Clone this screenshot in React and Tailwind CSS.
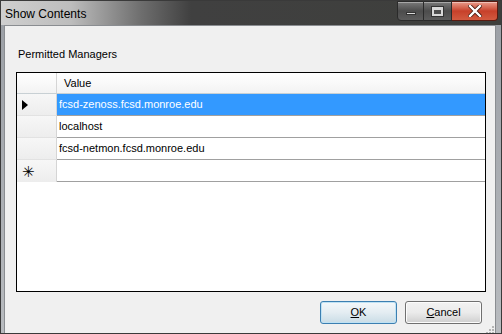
import React from 'react'

const rows = [
  { value: 'fcsd-zenoss.fcsd.monroe.edu', selected: true },
  { value: 'localhost' },
  { value: 'fcsd-netmon.fcsd.monroe.edu' },
]

const font = { fontFamily: '"Liberation Sans", Arial, sans-serif' }

const CaptionButtons = () => (
  <div className="flex h-[20px] self-start">
    {/* minimize */}
    <div className="w-[27px] h-full rounded-bl-[4px] border border-[#2a2a2a] bg-gradient-to-b from-[#7a7a7a] via-[#4c4c4c] to-[#5c5c5c] flex items-end justify-center pb-[5px] shadow-[inset_0_1px_0_rgba(255,255,255,0.35)]">
      <div className="w-[10px] h-[3px] bg-[#d8d8d8] border border-[#333]" />
    </div>
    {/* maximize */}
    <div className="w-[28px] h-full border-y border-r border-[#2a2a2a] bg-gradient-to-b from-[#7a7a7a] via-[#4c4c4c] to-[#5c5c5c] flex items-center justify-center shadow-[inset_0_1px_0_rgba(255,255,255,0.35)]">
      <div className="w-[11px] h-[9px] border-2 border-t-[3px] border-[#d8d8d8] outline outline-1 outline-[#333]" />
    </div>
    {/* close */}
    <div className="w-[46px] h-full rounded-br-[4px] border-y border-r border-[#5a1a10] bg-gradient-to-b from-[#e89a8a] via-[#c7402a] to-[#d25a40] flex items-center justify-center shadow-[inset_0_1px_0_rgba(255,255,255,0.4)]">
      <svg width="14" height="12" viewBox="0 0 14 12">
        <path d="M2 1 L12 11 M12 1 L2 11" stroke="#4a1a10" strokeWidth="4" strokeLinecap="square" />
        <path d="M2 1 L12 11 M12 1 L2 11" stroke="#ffffff" strokeWidth="2.4" strokeLinecap="square" />
      </svg>
    </div>
  </div>
)

const RowHeader = ({ children, last }) => (
  <div className={`w-[40px] shrink-0 border-r border-[#d5d5d5] bg-gradient-to-b from-[#f7f7f7] to-[#ededed] flex items-center pl-[5px] ${last ? '' : 'border-b border-b-[#e2e2e2]'}`}>
    {children}
  </div>
)

const SizeGrip = () => (
  <svg width="10" height="10" viewBox="0 0 10 10" className="self-end -mr-[8px] mb-[1px]">
    {[[8, 2], [5, 5], [8, 5], [2, 8], [5, 8], [8, 8]].map(([x, y], i) => (
      <rect key={i} x={x} y={y} width="2" height="2" fill="#b5b5b5" />
    ))}
  </svg>
)

export default function App() {
  return (
    <div
      className="w-[502px] h-[334px] flex flex-col bg-gradient-to-b from-[#9a9ea4] to-[#b8bbbf] border border-[#3a3a3a] text-[11px] text-black overflow-hidden"
      style={font}
    >
      {/* Title bar */}
      <div className="h-[24px] shrink-0 flex items-center justify-between pr-[3px] bg-[linear-gradient(90deg,#cfcfcf_0px,#bdbdbd_70px,#6e6e6e_140px,#404040_190px,#3e3f3c_100%)]">
        <span className="pl-[4px] pt-[2px] text-[12px] text-black">Show Contents</span>
        <CaptionButtons />
      </div>

      {/* Client area */}
      <div className="flex-1 flex flex-col mx-[3px] mr-[5px] mb-[4px] bg-[#f0f0f0] border border-[#8a8d91] pl-[11px] pr-[9px]">
        <div className="h-[20px] shrink-0" />
        <div className="h-[26px] shrink-0 pl-[2px]">Permitted Managers</div>

        {/* Grid */}
        <div className="h-[220px] shrink-0 border border-black bg-white flex flex-col">
          {/* Header */}
          <div className="h-[21px] flex border-b border-[#c8d0d4] bg-gradient-to-b from-white to-[#f3f3f3]">
            <div className="w-[40px] shrink-0 border-r border-[#d5d5d5]" />
            <div className="flex-1 flex items-center pl-[7px]">Value</div>
          </div>

          {rows.map((r, i) => (
            <div key={i} className="h-[22px] flex">
              <RowHeader>
                {r.selected && (
                  <svg width="6" height="10" viewBox="0 0 6 10">
                    <path d="M0 0 L6 5 L0 10 Z" fill="#000" />
                  </svg>
                )}
              </RowHeader>
              <div
                className={`flex-1 flex items-center pl-[2px] border-b border-[#a0a0a0] ${
                  r.selected ? 'bg-[#3399ff] text-white' : 'bg-white'
                }`}
              >
                {r.value}
              </div>
            </div>
          ))}

          {/* New row */}
          <div className="h-[22px] flex">
            <RowHeader last>
              <span className="text-[15px] leading-none mt-[3px]" style={{ fontFamily: '"DejaVu Sans", sans-serif' }}>
                ✳
              </span>
            </RowHeader>
            <div className="flex-1 border-b border-[#a0a0a0]" />
          </div>
        </div>

        {/* Buttons */}
        <div className="flex justify-end gap-[8px] pr-[4px] mt-[9px]">
          <button className="w-[77px] h-[23px] rounded-[3px] border border-[#3c7fb1] bg-gradient-to-b from-[#f4f8fa] via-[#e4edf2] to-[#c9dce6] shadow-[inset_0_0_0_1px_#bfe2f4]">
            <span className="underline">O</span>K
          </button>
          <button className="w-[77px] h-[23px] rounded-[3px] border border-[#707070] bg-gradient-to-b from-[#f2f2f2] via-[#ebebeb] to-[#cfcfcf] shadow-[inset_0_0_0_1px_#fcfcfc]">
            <span className="underline">C</span>ancel
          </button>
        </div>
        <div className="flex-1 flex justify-end">
          <SizeGrip />
        </div>
      </div>
    </div>
  )
}
